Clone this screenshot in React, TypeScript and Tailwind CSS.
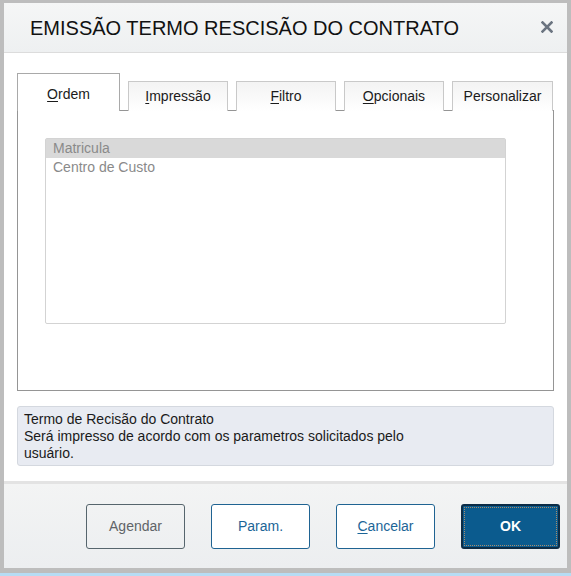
import React from 'react';

const font = { fontFamily: '"Liberation Sans", Arial, sans-serif' };

const tabs = [
  { label: 'Impressão', key: 'I', rest: 'mpressão' },
  { label: 'Filtro', key: 'F', rest: 'iltro' },
  { label: 'Opcionais', key: 'O', rest: 'pcionais' },
];

const Tab: React.FC<{ k?: string; rest: string; w: string }> = ({ k, rest, w }) => (
  <div
    className={`${w} h-[30px] -mb-px relative z-10 flex items-center justify-center border border-b-0 border-[#c9c9c9] bg-gradient-to-b from-[#f3f3f3] to-white text-[14px] text-[#1b1b1b]`}
  >
    <span>
      {k && <span className="underline underline-offset-2">{k}</span>}
      {rest}
    </span>
  </div>
);

export default function App() {
  return (
    <div className="w-[571px] h-[576px] bg-[#bdbdbd] flex flex-col" style={font}>
      <div className="ml-[4px] mt-[3px] w-[563px] h-[565px] bg-white flex flex-col">
        <div className="h-[50px] shrink-0 flex items-center justify-between pl-[26px] pr-[14px] border-b border-[#dcdcdc] bg-gradient-to-b from-[#f5f6f6] to-[#eef0f1]">
          <h1 className="text-[20px] text-[#111] leading-none">EMISSÃO TERMO RESCISÃO DO CONTRATO</h1>
          <svg width="12" height="12" viewBox="0 0 12 12" className="mb-[1px]">
            <path d="M1.5 1.5 L10.5 10.5 M10.5 1.5 L1.5 10.5" stroke="#6b7480" strokeWidth="2.6" strokeLinecap="square" />
          </svg>
        </div>

        <div className="flex-1 px-[13px] pt-[20px] flex flex-col">
          <div className="flex items-end gap-[8px]">
            <div className="w-[103px] h-[38px] -mb-px relative z-10 flex justify-center pt-[10px] border border-b-0 border-[#a9a9a9] bg-white text-[14px] text-[#1b1b1b]">
              <span>
                <span className="underline underline-offset-2">O</span>rdem
              </span>
            </div>
            {tabs.map((t) => (
              <Tab key={t.label} k={t.key} rest={t.rest} w="w-[100px]" />
            ))}
            <Tab rest="Personalizar" w="w-[101px]" />
          </div>
          <div className="h-[281px] border border-[#959595] pt-[27px] pl-[27px]">
            <div className="w-[461px] h-[186px] border border-[#d3d3d3] rounded-[2px] text-[14px] text-[#8a8a8a]">
              <div className="h-[19px] bg-[#d9d9d9] pl-[7px] leading-[19px]">Matricula</div>
              <div className="h-[19px] pl-[7px] leading-[19px]">Centro de Custo</div>
            </div>
          </div>

          <div className="mt-[15px] h-[60px] rounded-[3px] border border-[#d4d8df] bg-[#e8ebf2] px-[6px] pt-[4px] text-[14px] leading-[17px] text-[#1a1a1a]">
            Termo de Recisão do Contrato
            <br />
            Será impresso de acordo com os parametros solicitados pelo
            <br />
            usuário.
          </div>
        </div>

        <div className="h-[87px] shrink-0 border-t-[3px] border-[#e3e3e3] bg-gradient-to-b from-[#f3f4f4] to-[#eceef0] flex justify-end gap-[26px] pr-[7px] pt-[20px]">
          <button className="w-[99px] h-[45px] rounded-[3px] border border-[#56656d] text-[14px] text-[#5f6468]">Agendar</button>
          <button className="w-[99px] h-[45px] rounded-[3px] border border-[#1f6392] bg-white text-[14px] text-[#1c6597]">Param.</button>
          <button className="w-[99px] h-[45px] rounded-[3px] border border-[#1f6392] bg-white text-[14px] text-[#1c6597]">
            <span className="underline underline-offset-2">C</span>ancelar
          </button>
          <button className="w-[99px] h-[45px] rounded-[3px] border-2 border-[#0c2c46] bg-[#0b5b8e] text-[14px] font-bold text-white outline-1 outline-dotted outline-[#a88c6c] outline-offset-[-4px]">
            OK
          </button>
        </div>
      </div>
      <div className="mt-[5px] h-[3px] bg-[#b6dcf4]" />
    </div>
  );
}
